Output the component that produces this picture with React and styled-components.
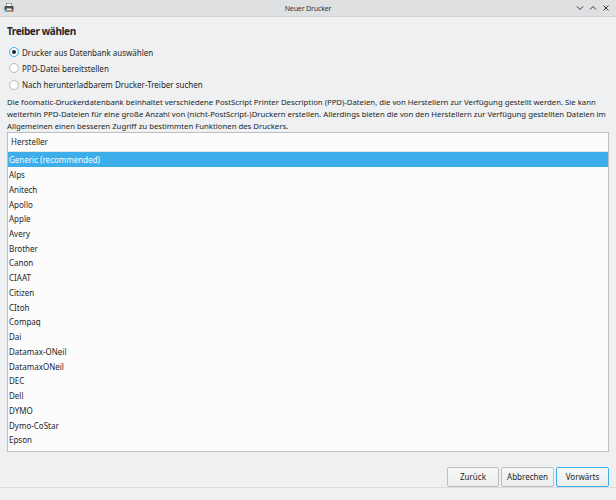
import React from "react";
import styled, { createGlobalStyle } from "styled-components";

const Global = createGlobalStyle`
  html, body { margin: 0; padding: 0; }
  body { background: #eff0f1; font-family: "Noto Sans", "DejaVu Sans", sans-serif; color: #232629; }
  * { box-sizing: border-box; }
`;

const Window = styled.div`
  width: 616px;
  height: 500px;
  display: flex;
  flex-direction: column;
  background: #eff0f1;
  overflow: hidden;
`;

const TitleBar = styled.div`
  height: 17px;
  flex: none;
  display: flex;
  align-items: center;
  padding: 0 4px;
  background: #dee0e2;
  border-bottom: 1px solid #d0d2d4;
  position: relative;
`;

const Title = styled.div`
  position: absolute;
  left: 0;
  right: 0;
  text-align: center;
  font-size: 7px;
  letter-spacing: -0.15px;
  color: #31363b;
  pointer-events: none;
`;

const Controls = styled.div`
  margin-left: auto;
  display: flex;
  gap: 5px;
  align-items: center;
  padding-right: 2px;
`;

const Body = styled.div`
  flex: 1;
  display: flex;
  flex-direction: column;
  padding: 7px 7px 0 7px;
  min-height: 0;
`;

const Heading = styled.div`
  font-size: 10px;
  font-weight: 700;
  letter-spacing: -0.4px;
  line-height: 14px;
  margin-bottom: 6px;
`;

const RadioRow = styled.label`
  display: flex;
  align-items: center;
  gap: 3px;
  height: 18px;
  font-size: 8px;
  padding-left: 2px;
`;

const Radio = styled.span`
  width: 10px;
  height: 10px;
  border-radius: 50%;
  border: 1px solid ${p => (p.$checked ? "#3daee9" : "#b9bbbd")};
  background: #fcfcfc;
  display: flex;
  align-items: center;
  justify-content: center;
  &::after {
    content: "";
    width: 4px;
    height: 4px;
    border-radius: 50%;
    background: ${p => (p.$checked ? "#232629" : "transparent")};
  }
`;

const Desc = styled.div`
  font-size: 7.75px;
  line-height: 12px;
  margin-top: 3px;
  margin-bottom: 0;
  white-space: nowrap;
`;

const Line = styled.div``;

const ListBox = styled.div`
  height: 320px;
  flex: none;
  width: 602px;
  background: #fcfcfc;
  border: 1px solid #bcbebf;
  display: flex;
  flex-direction: column;
  overflow: hidden;
`;

const Header = styled.div`
  height: 19px;
  flex: none;
  display: flex;
  align-items: center;
  padding-left: 3px;
  font-size: 8px;
  background: #fcfcfc;
  border-bottom: 1px solid #e3e5e7;
`;

const Row = styled.div`
  height: 14.74px;
  flex: none;
  display: flex;
  align-items: center;
  padding-left: 1px;
  padding-top: 1px;
  font-size: 8px;
  background: ${p => (p.$selected ? "#3daee9" : "#fcfcfc")};
  color: ${p => (p.$selected ? "#fcfcfc" : "#232629")};
`;

const Footer = styled.div`
  display: flex;
  justify-content: flex-end;
  gap: 2px;
  padding: 15px 0 0 0;
`;

const Button = styled.button`
  width: ${p => p.$w}px;
  height: 20px;
  font-family: inherit;
  font-size: 8px;
  color: #232629;
  background: linear-gradient(#f6f7f7, #eceded);
  border: 1px solid ${p => (p.$focus ? "#3daee9" : "#bcbebf")};
  border-radius: 2px;
  padding: 0;
`;

const BottomEdge = styled.div`
  margin-top: auto;
  height: 13px;
  border-top: 1px solid #dadcde;
  background: #eff0f1;
`;

const makers = [
  "Generic (recommended)", "Alps", "Anitech", "Apollo", "Apple", "Avery", "Brother", "Canon",
  "CIAAT", "Citizen", "CItoh", "Compaq", "Dai", "Datamax-ONeil", "DatamaxONeil", "DEC", "Dell",
  "DYMO", "Dymo-CoStar", "Epson", "Fujifilm",
];

function PrinterIcon() {
  return (
    <svg width="10" height="11" viewBox="0 0 10 11">
      <rect x="2.5" y="0.5" width="5" height="3" fill="#fcfcfc" stroke="#7f8c8d" strokeWidth="0.8" />
      <rect x="0.5" y="3" width="9" height="4.5" rx="0.8" fill="#4d4d4d" />
      <rect x="0.5" y="7.5" width="2.25" height="1.3" fill="#3daee9" />
      <rect x="2.75" y="7.5" width="2.25" height="1.3" fill="#27ae60" />
      <rect x="5" y="7.5" width="2.25" height="1.3" fill="#f67400" />
      <rect x="7.25" y="7.5" width="2.25" height="1.3" fill="#da4453" />
      <rect x="2.5" y="5.5" width="5" height="1.5" fill="#fcfcfc" />
    </svg>
  );
}

function Ctrl({ d }) {
  return (
    <svg width="8" height="8" viewBox="0 0 8 8">
      <path d={d} fill="none" stroke="#31363b" strokeWidth="1" />
    </svg>
  );
}

export default function App() {
  return (
    <Window>
      <Global />
      <TitleBar>
        <PrinterIcon />
        <Title>Neuer Drucker</Title>
        <Controls>
          <Ctrl d="M1 2.5 L4 5.5 L7 2.5" />
          <Ctrl d="M1 5.5 L4 2.5 L7 5.5" />
          <Ctrl d="M1.5 1.5 L6.5 6.5 M6.5 1.5 L1.5 6.5" />
        </Controls>
      </TitleBar>
      <Body>
        <Heading>Treiber wählen</Heading>
        <RadioRow><Radio $checked />Drucker aus Datenbank auswählen</RadioRow>
        <RadioRow><Radio />PPD-Datei bereitstellen</RadioRow>
        <RadioRow><Radio />Nach herunterladbarem Drucker-Treiber suchen</RadioRow>
        <Desc>
          <Line>Die foomatic-Druckerdatenbank beinhaltet verschiedene PostScript Printer Description (PPD)-Dateien, die von Herstellern zur Verfügung gestellt werden. Sie kann</Line>
          <Line>weiterhin PPD-Dateien für eine große Anzahl von (nicht-PostScript-)Druckern erstellen. Allerdings bieten die von den Herstellern zur Verfügung gestellten Dateien im</Line>
          <Line>Allgemeinen einen besseren Zugriff zu bestimmten Funktionen des Druckers.</Line>
        </Desc>
        <ListBox>
          <Header>Hersteller</Header>
          {makers.map((m, i) => (
            <Row key={m} $selected={i === 0}>{m}</Row>
          ))}
        </ListBox>
        <Footer>
          <Button $w={52}>Zurück</Button>
          <Button $w={53}>Abbrechen</Button>
          <Button $w={53} $focus>Vorwärts</Button>
        </Footer>
      </Body>
      <BottomEdge />
    </Window>
  );
}
